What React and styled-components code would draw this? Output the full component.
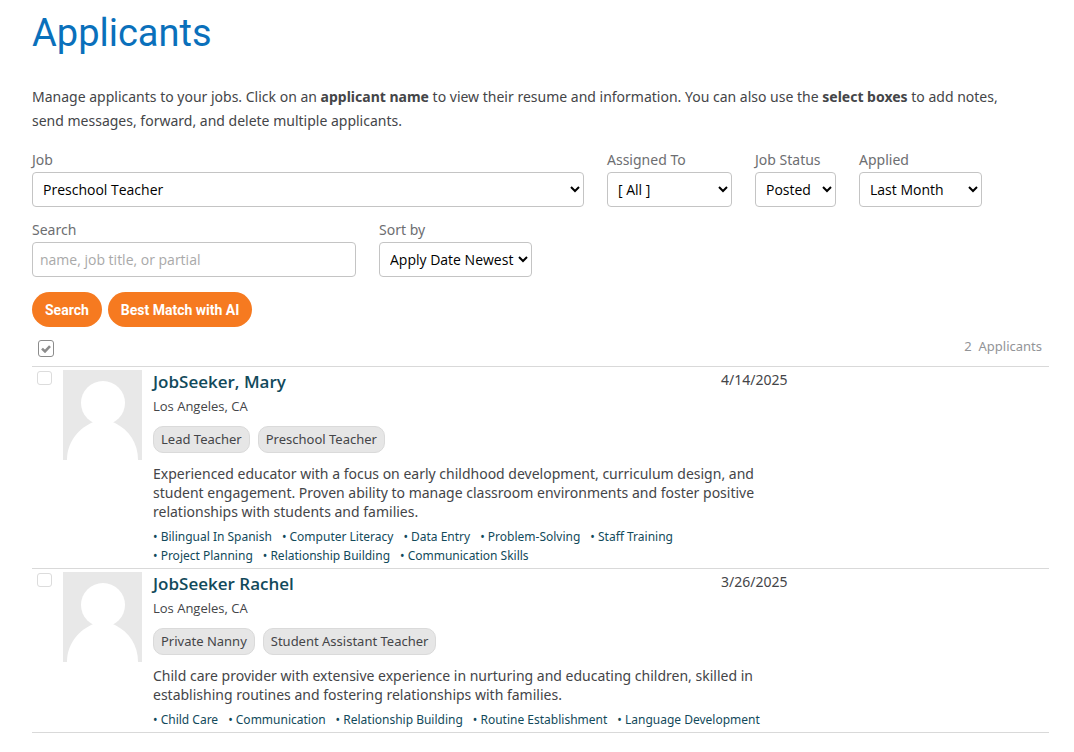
import React, { useState } from "react";
import styled, { createGlobalStyle } from "styled-components";

const GlobalStyle = createGlobalStyle`
  *, *::before, *::after { box-sizing: border-box; }
  body {
    margin: 0;
    background: #fff;
    color: #444548;
    font-family: "Noto Sans", "Open Sans", sans-serif;
    font-size: 14px;
    line-height: 19px;
  }
`;

const Page = styled.main`
  padding: 9px 25px 20px 32px;
`;

const Title = styled.h1`
  margin: 0 0 28px;
  color: #0a70bb;
  font-family: Roboto, sans-serif;
  font-size: 38px;
  font-weight: 400;
  line-height: 48px;
`;

const Intro = styled.p`
  margin: 0 0 17px;
  max-width: 1000px;
  line-height: 24px;
`;

const Filters = styled.form`
  display: flex;
  flex-direction: column;
  align-items: stretch;
`;

const FilterRow = styled.div`
  display: flex;
  gap: 23px;
  margin-bottom: ${(p) => p.$after};
`;

const Field = styled.div`
  display: flex;
  flex-direction: column;
  gap: 2px;
  flex: 0 1 ${(p) => p.$basis || "auto"};
  min-width: 0;
`;

const Label = styled.label`
  color: #6d6e71;
  line-height: 20px;
`;

const Select = styled.select`
  height: 35px;
  padding: 0 0 0 6px;
  border: 1px solid #c4c4c4;
  border-radius: 4px;
  background: #fff;
  color: #000;
  font-family: "Open Sans", sans-serif;
  font-size: 14px;
`;

const TextInput = styled.input`
  height: 35px;
  padding: 0 7px;
  border: 1px solid #c4c4c4;
  border-radius: 4px;
  background: #fff;
  color: #000;
  font-family: "Open Sans", sans-serif;
  font-size: 14px;

  &::placeholder { color: #a9a9a9; }
`;

const Actions = styled.div`
  display: flex;
  gap: 6px;
`;

const PillButton = styled.button`
  height: 35px;
  padding: 0 13px;
  border: 0;
  border-radius: 18px;
  background: #f67a20;
  color: #fff;
  font-family: Roboto, sans-serif;
  font-size: 14px;
  font-weight: 700;
  cursor: pointer;
`;

const ListHeader = styled.div`
  display: flex;
  justify-content: space-between;
  padding: 10px 7px 9px 6px;
  height: 39px;
`;

const SelectAll = styled.button`
  display: grid;
  place-items: center;
  width: 16px;
  height: 17px;
  margin-top: 3px;
  padding: 0;
  border: 1px solid #8c8c8c;
  border-radius: 3px;
  background: #fff;
  cursor: pointer;
`;

const Count = styled.span`
  color: #929497;
  font-size: 13px;
`;

const List = styled.ul`
  margin: 0;
  padding: 0;
  list-style: none;
  border-bottom: 1px solid #d9d9d9;
`;

const Row = styled.li`
  display: flex;
  align-items: flex-start;
  padding: 3px 0;
  border-top: 1px solid #d9d9d9;
`;

const RowCheck = styled.input`
  appearance: none;
  flex: none;
  width: 15px;
  height: 14px;
  margin: 1px 11px 0 5px;
  border: 1px solid #dcdcdc;
  border-radius: 3px;
  background: #fff;

  &:checked { background: #8c8c8c; }
`;

const Photo = styled.svg`
  flex: none;
  display: block;
  width: 79px;
  height: 90px;
  margin-right: 11px;
`;

const Details = styled.div`
  flex: 1;
  min-width: 0;
`;

const Heading = styled.div`
  display: grid;
  grid-template-columns: 568fr 328fr;
`;

const Name = styled.a`
  color: #124a5b;
  font-family: "Open Sans", sans-serif;
  font-size: 17px;
  font-weight: 600;
  line-height: 24px;
  text-decoration: none;
`;

const Place = styled.div`
  padding: 3px 0;
  font-family: "Open Sans", sans-serif;
  font-size: 13px;
`;

const Tags = styled.div`
  display: flex;
  gap: 8px;
  margin: 7px 0 11px;
`;

const Tag = styled.span`
  padding: 3px 7px;
  border: 1px solid #dadada;
  border-radius: 10px;
  background: #e6e6e6;
  font-size: 13px;
`;

const Summary = styled.p`
  margin: 0 0 6px;
  width: 70%;
`;

const Skills = styled.ul`
  display: flex;
  flex-wrap: wrap;
  column-gap: 10px;
  margin: 0;
  padding: 0;
  width: 68%;
  list-style: none;
  color: #124a5b;
  font-size: 12px;
`;

const applicants = [
  {
    name: "JobSeeker, Mary",
    place: "Los Angeles, CA",
    date: "4/14/2025",
    tags: ["Lead Teacher", "Preschool Teacher"],
    summary:
      "Experienced educator with a focus on early childhood development, curriculum design, and student engagement. Proven ability to manage classroom environments and foster positive relationships with students and families.",
    skills: [
      "Bilingual In Spanish",
      "Computer Literacy",
      "Data Entry",
      "Problem-Solving",
      "Staff Training",
      "Project Planning",
      "Relationship Building",
      "Communication Skills",
    ],
  },
  {
    name: "JobSeeker Rachel",
    place: "Los Angeles, CA",
    date: "3/26/2025",
    tags: ["Private Nanny", "Student Assistant Teacher"],
    summary:
      "Child care provider with extensive experience in nurturing and educating children, skilled in establishing routines and fostering relationships with families.",
    skills: [
      "Child Care",
      "Communication",
      "Relationship Building",
      "Routine Establishment",
      "Language Development",
    ],
  },
];

function SelectField({ id, label, basis, options }) {
  return (
    <Field $basis={basis}>
      <Label htmlFor={id}>{label}</Label>
      <Select id={id}>
        {options.map((o) => (
          <option key={o}>{o}</option>
        ))}
      </Select>
    </Field>
  );
}

function Applicant({ person, checked, onToggle }) {
  return (
    <Row>
      <RowCheck
        type="checkbox"
        aria-label={`Select ${person.name}`}
        checked={checked}
        onChange={onToggle}
      />
      <Photo viewBox="0 0 79 90" aria-hidden="true">
        <rect width="79" height="90" fill="#e8e8e8" />
        <circle cx="40" cy="33" r="22" fill="#fff" />
        <path d="M4 90C4 73 14 60 28 53L40 48L52 53C66 60 75 73 75 90Z" fill="#fff" />
      </Photo>
      <Details>
        <Heading>
          <Name href="#">{person.name}</Name>
          <time>{person.date}</time>
        </Heading>
        <Place>{person.place}</Place>
        <Tags>
          {person.tags.map((t) => (
            <Tag key={t}>{t}</Tag>
          ))}
        </Tags>
        <Summary>{person.summary}</Summary>
        <Skills>
          {person.skills.map((s) => (
            <li key={s}>• {s}</li>
          ))}
        </Skills>
      </Details>
    </Row>
  );
}

export default function App() {
  const [selected, setSelected] = useState([]);
  const toggle = (name) =>
    setSelected((s) => (s.includes(name) ? s.filter((n) => n !== name) : [...s, name]));
  const toggleAll = () =>
    setSelected((s) => (s.length === applicants.length ? [] : applicants.map((a) => a.name)));

  return (
    <>
      <GlobalStyle />
      <Page>
        <Title>Applicants</Title>
        <Intro>
          Manage applicants to your jobs. Click on an <b>applicant name</b> to view their resume and
          information. You can also use the <b>select boxes</b> to add notes, send messages,
          forward, and delete multiple applicants.
        </Intro>
        <Filters onSubmit={(e) => e.preventDefault()}>
          <FilterRow $after="13px">
            <SelectField id="job" label="Job" basis="552px" options={["Preschool Teacher"]} />
            <SelectField id="assigned" label="Assigned To" basis="125px" options={["[ All ]"]} />
            <SelectField id="status" label="Job Status" basis="81px" options={["Posted"]} />
            <SelectField id="applied" label="Applied" basis="123px" options={["Last Month"]} />
          </FilterRow>
          <FilterRow $after="15px">
            <Field $basis="324px">
              <Label htmlFor="search">Search</Label>
              <TextInput id="search" type="text" placeholder="name, job title, or partial" />
            </Field>
            <SelectField id="sort" label="Sort by" basis="153px" options={["Apply Date Newest"]} />
          </FilterRow>
          <Actions>
            <PillButton type="submit">Search</PillButton>
            <PillButton type="button">Best Match with AI</PillButton>
          </Actions>
        </Filters>
        <ListHeader>
          <SelectAll type="button" aria-label="Select all applicants" onClick={toggleAll}>
            <svg width="10" height="8" viewBox="0 0 10 8" aria-hidden="true">
              <path d="M1 3.6L4 6.4L9 1.2" fill="none" stroke="#8c8c8c" strokeWidth="2.6" />
            </svg>
          </SelectAll>
          <Count>2&nbsp; Applicants</Count>
        </ListHeader>
        <List>
          {applicants.map((a) => (
            <Applicant
              key={a.name}
              person={a}
              checked={selected.includes(a.name)}
              onToggle={() => toggle(a.name)}
            />
          ))}
        </List>
      </Page>
    </>
  );
}
